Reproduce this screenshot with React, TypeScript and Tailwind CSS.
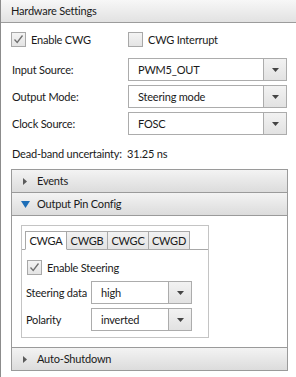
import React from "react"

const Check = ({ checked }: { checked?: boolean }) => (
  <span className="flex h-[15px] w-[15px] shrink-0 items-center justify-center border border-[#a8a8a8] bg-gradient-to-b from-[#f4f4f4] to-[#e4e4e4]">
    {checked && (
      <svg width="11" height="11" viewBox="0 0 11 11">
        <path d="M1.5 5.5 L4.2 8.5 L9.5 1.5" fill="none" stroke="#6f6f6f" strokeWidth="1.3" />
      </svg>
    )}
  </span>
)

const Combo = ({ value, w }: { value: string; w: string }) => (
  <div className={`flex h-[23px] border border-[#acacac] bg-white ${w}`}>
    <div className="flex flex-1 items-center pl-[9px]">{value}</div>
    <div className="flex w-[23px] items-center justify-center border-l border-[#acacac] bg-gradient-to-b from-[#f2f2f2] to-[#e2e2e2]">
      <svg width="7" height="4" viewBox="0 0 7 4">
        <path d="M0 0 H7 L3.5 4 Z" fill="#444" />
      </svg>
    </div>
  </div>
)

const Expander = ({ title, open, first }: { title: string; open?: boolean; first?: boolean }) => (
  <div
    className={`flex h-[24px] items-center gap-[7px] border border-[#9a9a9a] bg-gradient-to-b from-[#f3f3f3] to-[#dcdcdc] pl-[9px] ${first ? "" : "-mt-px"}`}
  >
    {open ? (
      <svg width="9" height="7" viewBox="0 0 9 7">
        <path d="M0 0 H9 L4.5 7 Z" fill="#1f6fb8" />
      </svg>
    ) : (
      <svg width="9" height="7" viewBox="0 0 9 7">
        <path d="M2 0 L6 3.5 L2 7 Z" fill="#5a5a5a" />
      </svg>
    )}
    <span>{title}</span>
  </div>
)

const Tab = ({ label, active, first }: { label: string; active?: boolean; first?: boolean }) => (
  <div
    className={`flex h-[19px] w-[42px] items-center justify-center border border-[#a8a8a8] ${first ? "" : "-ml-px"} ${
      active ? "relative z-10 border-b-white bg-white" : "bg-gradient-to-b from-[#f2f2f2] to-[#e3e3e3]"
    }`}
  >
    {label}
  </div>
)

export default function App() {
  return (
    <div
      className="h-[377px] w-[296px] overflow-hidden whitespace-nowrap border-l border-[#8c8c8c] bg-white text-[11px] leading-[16px] tracking-[-0.2px] text-[#1a1a1a]"
      style={{ fontFamily: 'Lato, "Liberation Sans", sans-serif' }}
    >
      <div className="flex h-[23px] items-center border-b border-[#9c9c9c] bg-gradient-to-b from-[#f7f7f7] to-[#e2e2e2] pl-[10px]">
        Hardware Settings
      </div>

      <div className="pl-[10px] pr-[8px]">
        <div className="mt-[9px] flex h-[15px] items-center">
          <div className="flex w-[117px] items-center gap-[5px]">
            <Check checked />
            <span>Enable CWG</span>
          </div>
          <div className="flex items-center gap-[5px]">
            <Check />
            <span>CWG Interrupt</span>
          </div>
        </div>

        <div className="mt-[11px] flex flex-col gap-[4px]">
          {[
            ["Input Source:", "PWM5_OUT"],
            ["Output Mode:", "Steering mode"],
            ["Clock Source:", "FOSC"],
          ].map(([l, v]) => (
            <div key={l} className="flex h-[23px] items-center">
              <span className="w-[117px] pl-px">{l}</span>
              <Combo value={v} w="w-[159px]" />
            </div>
          ))}
        </div>

        <div className="mt-[11px] h-[16px] pl-px">Dead-band uncertainty:&nbsp;&nbsp;31.25 ns</div>

        <div className="mt-[7px]">
          <Expander title="Events" first />
          <Expander title="Output Pin Config" open />
          <div className="h-[131px] border-x border-[#9a9a9a] px-[9px] pt-[9px]">
            <div className="h-[113px] w-[188px] border border-[#c4c4c4] px-[3px] pt-[5px]">
              <div className="flex">
                <Tab label="CWGA" active first />
                <Tab label="CWGB" />
                <Tab label="CWGC" />
                <Tab label="CWGD" />
              </div>
              <div className="-mx-[3px] -mt-px border-t border-[#a8a8a8] px-[3px] pt-[10px]">
                <div className="flex h-[15px] items-center gap-[5px] pl-[2px]">
                  <Check checked />
                  <span>Enable Steering</span>
                </div>
                <div className="mt-[6px] flex flex-col gap-[4px]">
                  <div className="flex h-[23px] items-center">
                    <span className="w-[66px] pl-px">Steering data</span>
                    <Combo value="high" w="w-[101px]" />
                  </div>
                  <div className="flex h-[23px] items-center">
                    <span className="w-[66px] pl-px">Polarity</span>
                    <Combo value="inverted" w="w-[101px]" />
                  </div>
                </div>
              </div>
            </div>
          </div>
          <Expander title="Auto-Shutdown" first />
        </div>
      </div>
    </div>
  )
}
